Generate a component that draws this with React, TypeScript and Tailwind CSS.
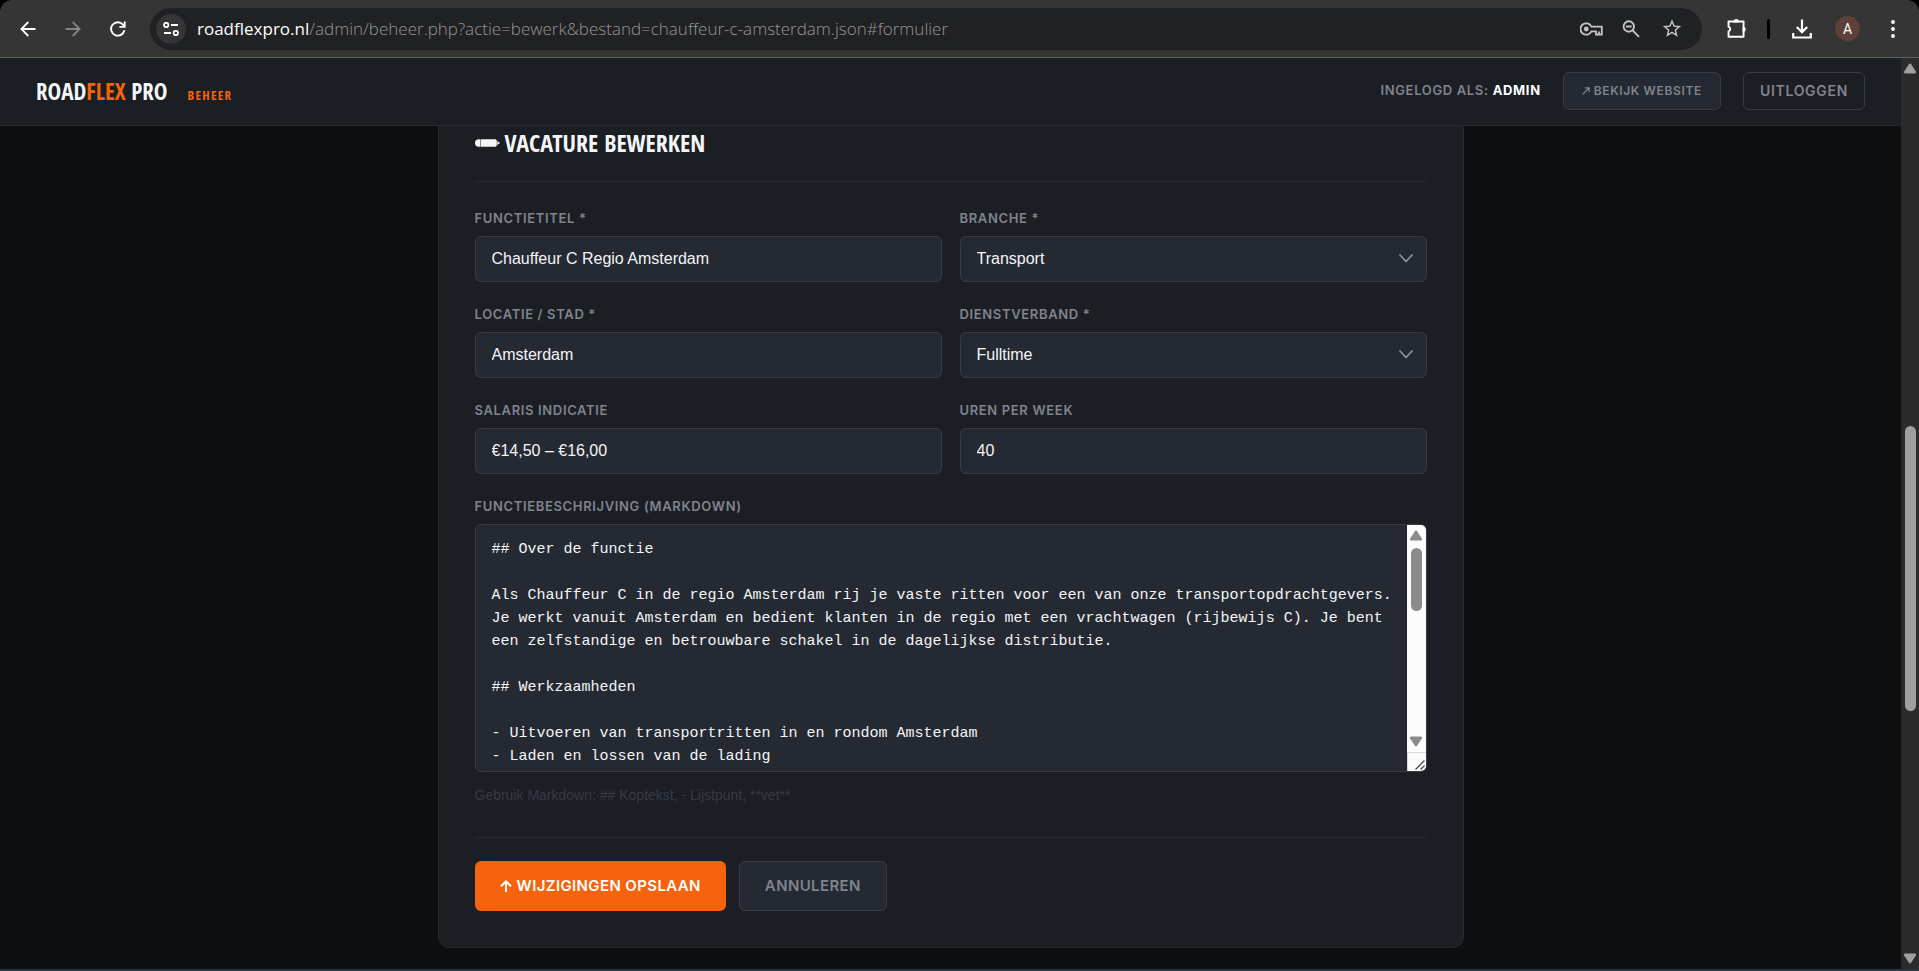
import React from "react";
import { MdStarBorder } from "react-icons/md";
import { clsx } from "clsx";

const BODY_FONT = "font-['Liberation_Sans',Arial,sans-serif]";
const LABEL_FONT = "font-[Inter,sans-serif]";
const DISPLAY_FONT =
  "font-['Open_Sans_Condensed','Roboto_Condensed','Open_Sans',sans-serif]";

const description = `## Over de functie

Als Chauffeur C in de regio Amsterdam rij je vaste ritten voor een van onze transportopdrachtgevers.
Je werkt vanuit Amsterdam en bedient klanten in de regio met een vrachtwagen (rijbewijs C). Je bent
een zelfstandige en betrouwbare schakel in de dagelijkse distributie.

## Werkzaamheden

- Uitvoeren van transportritten in en rondom Amsterdam
- Laden en lossen van de lading`;

const fieldClass = clsx(
  BODY_FONT,
  "h-[46px] w-full rounded-md border border-[#363b46] bg-[#252932] px-4 text-base text-[#f4f5f7] outline-none",
);

/* ---------- browser toolbar ---------- */

const IconButton: React.FC<{
  label: string;
  className?: string;
  children: React.ReactNode;
}> = ({ label, className, children }) => (
  <button
    type="button"
    aria-label={label}
    className={clsx("flex shrink-0 items-center justify-center", className)}
  >
    {children}
  </button>
);

const BrowserBar = () => (
  <div className="bg-black">
    <div className="flex h-[58px] items-center rounded-t-xl border-b border-[#656161] bg-[#353535] pr-3 pl-[5px] text-white">
      <IconButton label="Back" className="w-[45px]">
        <svg width="16" height="16" viewBox="0 0 16 16" fill="none" stroke="currentColor" strokeWidth="1.8">
          <path d="M15.500 8H1.800M8.300 1 1.400 8l6.900 7" />
        </svg>
      </IconButton>
      <IconButton label="Forward" className="w-[45px] text-[#858585]">
        <svg width="16" height="16" viewBox="0 0 16 16" fill="none" stroke="currentColor" strokeWidth="1.8">
          <path d="M.5 8h13.700M7.700 1l6.900 7-6.900 7" />
        </svg>
      </IconButton>
      <IconButton label="Reload" className="w-[45px]">
        <svg width="16" height="16" viewBox="0 0 16 16" fill="none" stroke="currentColor" strokeWidth="1.9">
          <path d="M14.400 9.200A6.700 6.700 0 1 1 12.800 3.400L14.600 5.300" />
          <path d="M14.700.4v5.500H9.400" />
        </svg>
      </IconButton>

      <div className="ml-[10px] flex h-[42px] min-w-0 flex-1 items-center rounded-full bg-[#202124] pr-[19px] pl-[6px]">
        <IconButton label="Site information" className="size-[30px] rounded-full bg-[#353535]">
          <svg width="16" height="14" viewBox="0 0 16 14" fill="none" stroke="currentColor" strokeWidth="1.8">
            <circle cx="3.2" cy="3" r="2.2" />
            <path d="M8 3h7M1 11h7" />
            <circle cx="12.8" cy="11" r="2.2" />
          </svg>
        </IconButton>
        <p className="ml-[11px] flex-1 truncate font-['Open_Sans',sans-serif] text-[17px] font-light text-[#969798]">
          <span className="font-normal text-white">roadflexpro.nl</span>
          /admin/beheer.php?actie=bewerk&amp;bestand=chauffeur-c-amsterdam.json#formulier
        </p>
        <div className="flex items-center text-[#c3c4c5]">
          <IconButton label="Passwords" className="w-10">
            <svg width="23" height="14" viewBox="0 0 23 14" fill="none" stroke="currentColor" strokeWidth="1.8">
              <path d="M11.400 4.700A5.700 5.700 0 1 0 11.400 9.300H16V12.500H21.800V4.700Z" />
              <circle cx="6.3" cy="7" r="2.4" fill="currentColor" stroke="none" />
              <path d="M19 12.500V9.500" />
            </svg>
          </IconButton>
          <IconButton label="Zoom" className="w-10">
            <svg width="18" height="18" viewBox="0 0 18 18" fill="none" stroke="currentColor" strokeWidth="1.9">
              <circle cx="6.8" cy="6.5" r="5.2" />
              <path d="M10.600 10.300 17 16.900M4 6.500h5.600" />
            </svg>
          </IconButton>
          <IconButton label="Bookmark this tab" className="ml-[10px] w-[22px]">
            <MdStarBorder size={23} />
          </IconButton>
        </div>
      </div>

      <IconButton label="Extensions" className="ml-[25px] w-5">
        <svg width="21" height="21" viewBox="0 0 21 21" fill="none" stroke="currentColor" strokeWidth="2" strokeLinejoin="round">
          <path d="M1.600 3.200H17.400V19.100H1.600v-5.600a2.500 2.500 0 0 0 0-4.800Z" />
          <path d="M8 3.200a1.700 1.700 0 0 1 3.400 0ZM17.400 9.500a1.900 1.900 0 0 1 0 3.600Z" fill="currentColor" />
        </svg>
      </IconButton>
      <span className="ml-5 h-5 w-[3px] rounded-full bg-black" />
      <IconButton label="Downloads" className="ml-[22px] w-5">
        <svg width="20" height="20" viewBox="0 0 20 20" fill="none" stroke="currentColor" strokeWidth="2.2">
          <path d="M10 .5v12.300M4.800 8 10 13.200 15.200 8M1.200 14v4.500h17.600V14" />
        </svg>
      </IconButton>
      <IconButton
        label="Profile"
        className="ml-[23px] size-[25px] rounded-full bg-[#5d4037] font-[Roboto,sans-serif] text-sm"
      >
        A
      </IconButton>
      <IconButton label="Menu" className="ml-[19px] w-7">
        <svg width="4" height="18" viewBox="0 0 4 18" fill="currentColor">
          <circle cx="2" cy="2" r="1.9" />
          <circle cx="2" cy="9" r="1.9" />
          <circle cx="2" cy="16" r="1.9" />
        </svg>
      </IconButton>
    </div>
  </div>
);

/* ---------- scrollbars ---------- */

const Triangle: React.FC<{ down?: boolean }> = ({ down }) => (
  <svg
    width="14"
    height="11"
    viewBox="0 0 14 11"
    fill="currentColor"
    className={clsx("shrink-0", down && "rotate-180")}
  >
    <path d="M5.900 1.200Q7 0 8.100 1.200L13 8.800Q13.400 10.500 12 10.500H2Q.6 10.500 1 8.800Z" />
  </svg>
);

const PageScrollbar = () => (
  <div
    aria-hidden="true"
    className="flex w-[18px] shrink-0 flex-col items-center bg-[#2b2b2b] py-[5px] text-[#9f9f9f]"
  >
    <Triangle />
    <div className="flex w-full flex-1 flex-col items-center">
      <div className="grow-[352]" />
      <div className="w-[11px] grow-[286] rounded-full bg-[#9f9f9f]" />
      <div className="grow-[242]" />
    </div>
    <Triangle down />
  </div>
);

const TextareaScrollbar = () => (
  <div aria-hidden="true" className="flex w-[19px] shrink-0 flex-col bg-[#fcfcfc] text-[#8b8b8b]">
    <div className="flex flex-1 flex-col items-center py-[5px]">
      <Triangle />
      <div className="mt-[7px] h-[63px] w-[11px] rounded-full bg-[#8b8b8b]" />
      <div className="flex-1" />
      <Triangle down />
    </div>
    <div className="flex h-[19px] items-end justify-end border-t border-l border-[#d9d9d9] p-px">
      <svg width="10" height="10" viewBox="0 0 10 10" stroke="#4a4a4a" strokeWidth="1.3">
        <path d="M.5 9.500 9.500.5M5.500 9.500l4-4" />
      </svg>
    </div>
  </div>
);

/* ---------- form ---------- */

interface FieldProps {
  id: string;
  label: string;
  children: React.ReactNode;
}

const Field: React.FC<FieldProps> = ({ id, label, children }) => (
  <div>
    <label
      htmlFor={id}
      className={clsx(
        LABEL_FONT,
        "mb-[10px] block text-[13px] leading-4 font-semibold tracking-wider text-[#7f848e] uppercase",
      )}
    >
      {label}
    </label>
    {children}
  </div>
);

const TextField: React.FC<{ id: string; label: string; value: string }> = ({
  id,
  label,
  value,
}) => (
  <Field id={id} label={label}>
    <input id={id} type="text" defaultValue={value} className={fieldClass} />
  </Field>
);

const SelectField: React.FC<{
  id: string;
  label: string;
  options: string[];
}> = ({ id, label, options }) => (
  <Field id={id} label={label}>
    <div className="relative">
      <select id={id} className={clsx(fieldClass, "appearance-none")}>
        {options.map((o) => (
          <option key={o}>{o}</option>
        ))}
      </select>
      <svg
        width="14"
        height="9"
        viewBox="0 0 14 9"
        fill="none"
        stroke="#8a8f99"
        strokeWidth="1.8"
        strokeLinecap="round"
        strokeLinejoin="round"
        className="pointer-events-none absolute top-[18px] right-[14px]"
      >
        <path d="M1 1l6 6.500L13 1" />
      </svg>
    </div>
  </Field>
);

const AdminHeader = () => (
  <header className="flex h-[68px] shrink-0 items-center justify-between border-b border-[#262a31] bg-[#1b1e23] px-9 pb-px">
    <div className={clsx(DISPLAY_FONT, "flex items-baseline gap-5 font-black")}>
      <a href="#" className="text-[23px] leading-7 text-[#f4f5f7]">
        ROAD<span className="text-[#f6630c]">FLEX</span> PRO
      </a>
      <span className="text-[13px] tracking-widest text-[#f6630c]">BEHEER</span>
    </div>
    <div
      className={clsx(
        LABEL_FONT,
        "flex items-center gap-[22px] text-[13px] font-semibold tracking-wider text-[#7f848e]",
      )}
    >
      <p>
        INGELOGD ALS: <strong className="font-bold text-white">ADMIN</strong>
      </p>
      <a
        href="#"
        className="flex h-[38px] items-center gap-1 rounded-md border border-[#363b46] bg-[#252932] px-[18px] text-xs"
      >
        <svg width="8" height="8" viewBox="0 0 8 8" fill="none" stroke="currentColor" strokeWidth="1.3">
          <path d="M.6 7.400 7 1M2.800.9H7.100V5.200" />
        </svg>
        BEKIJK WEBSITE
      </a>
      <button
        type="button"
        className="h-[38px] rounded-md border border-[#363b46] px-4 text-sm tracking-wider"
      >
        UITLOGGEN
      </button>
    </div>
  </header>
);

const VacancyForm = () => (
  <form
    id="formulier"
    onSubmit={(e) => e.preventDefault()}
    className="mx-auto w-full max-w-[1026px] rounded-b-xl border border-t-0 border-[#252932] bg-[#1b1e23] px-9 pt-[3px] pb-9"
  >
    <h1
      className={clsx(
        DISPLAY_FONT,
        "mb-7 flex items-center gap-[5px] border-b border-[#262a31] pb-6 text-2xl leading-7 font-black text-[#f4f5f7]",
      )}
    >
      <svg width="25" height="8" viewBox="0 0 25 8" fill="currentColor">
        <path d="M3.200.3H5V7.700H3.200Q0 7.300 0 4T3.200.3ZM5.500.3H20.600L21.800 1.600V6.400L20.600 7.700H5.500ZM22.300 1.900 25 4l-2.700 2.100Z" />
      </svg>
      VACATURE BEWERKEN
    </h1>

    <div className="grid grid-cols-2 gap-x-[18px] gap-y-6">
      <TextField id="functietitel" label="Functietitel *" value="Chauffeur C Regio Amsterdam" />
      <SelectField id="branche" label="Branche *" options={["Transport"]} />
      <TextField id="locatie" label="Locatie / Stad *" value="Amsterdam" />
      <SelectField id="dienstverband" label="Dienstverband *" options={["Fulltime"]} />
      <TextField id="salaris" label="Salaris indicatie" value="€14,50 – €16,00" />
      <TextField id="uren" label="Uren per week" value="40" />
      <div className="col-span-2">
        <Field id="beschrijving" label="Functiebeschrijving (Markdown)">
          <div className="flex h-[248px] overflow-hidden rounded-md border border-[#363b46] bg-[#252932]">
            <textarea
              id="beschrijving"
              defaultValue={description}
              wrap="off"
              className="min-w-0 flex-1 resize-none overflow-hidden px-4 pt-[13px] font-['Liberation_Mono','Courier_New',monospace] text-[15px] leading-[23px] text-[#f4f5f7] outline-none"
            />
            <TextareaScrollbar />
          </div>
        </Field>
        <p className={clsx(BODY_FONT, "mt-[13px] text-sm leading-5 text-[#363b46]")}>
          Gebruik Markdown: ## Koptekst, - Lijstpunt, **vet**
        </p>
      </div>
    </div>

    <div
      className={clsx(
        LABEL_FONT,
        "mt-8 flex gap-[13px] border-t border-[#262a31] pt-[23px] text-[15px] font-semibold tracking-wide",
      )}
    >
      <button
        type="submit"
        className="flex h-[50px] items-center gap-[5px] rounded-md bg-[#f6630c] px-[25px] text-white"
      >
        <svg width="12" height="12" viewBox="0 0 12 12" fill="none" stroke="currentColor" strokeWidth="2">
          <path d="M6 12V1.500M1 6.300 6 1.300l5 5" />
        </svg>
        WIJZIGINGEN OPSLAAN
      </button>
      <button
        type="button"
        className="h-[50px] rounded-md border border-[#363b46] bg-[#252932] px-[25px] text-[#7f848e]"
      >
        ANNULEREN
      </button>
    </div>
  </form>
);

export default function App() {
  return (
    <div className="flex h-screen flex-col overflow-hidden border-b-2 border-[#22384b] bg-[#0d0f10]">
      <BrowserBar />
      <div className="flex min-h-0 flex-1">
        <div className="flex min-w-0 flex-1 flex-col">
          <AdminHeader />
          <main className="min-h-0 flex-1 overflow-hidden">
            <VacancyForm />
          </main>
        </div>
        <PageScrollbar />
      </div>
    </div>
  );
}
